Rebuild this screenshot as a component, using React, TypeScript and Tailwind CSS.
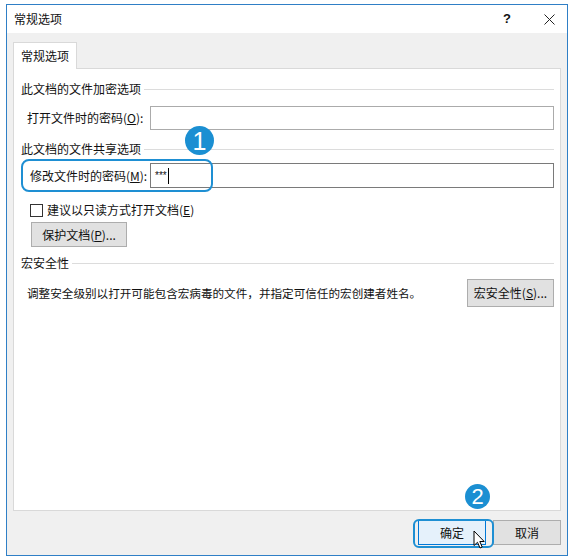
import React from "react";

const font = "font-['Noto_Sans_CJK_SC','Microsoft_YaHei',sans-serif]";

function GroupHeader({ text }: { text: string }) {
  return (
    <div className="flex items-center gap-[3px] h-[16px]">
      <span className="leading-[16px]">{text}</span>
      <div className="flex-1 h-px bg-[#dcdcdc] mr-[0px]" />
    </div>
  );
}

function Cursor() {
  return (
    <svg width="13" height="20" viewBox="0 0 13 20" className="block">
      <path
        d="M1 1 L1 15.5 L4.5 12.3 L7 18 L9.2 17 L6.8 11.5 L11.2 11.5 Z"
        fill="#ffffff"
        stroke="#000000"
        strokeWidth="1"
        strokeLinejoin="round"
      />
    </svg>
  );
}

export default function App() {
  return (
    <div className={`w-[576px] h-[559px] bg-white pt-[4px] pl-[6px] text-[12px] text-[#111] ${font}`}>
      <div className="relative w-[562px] h-[552px] border border-[#2f7fc6] bg-[#f0f0f0] flex flex-col">
        {/* title bar */}
        <div className="h-[28px] bg-white flex items-center justify-between pl-[7px] pr-[8px]">
          <span className="leading-[16px]">常规选项</span>
          <div className="flex items-center gap-[22px]">
            <span className="w-[20px] text-center text-[13px] leading-[16px] font-bold font-['Liberation_Sans',sans-serif]">?</span>
            <span className="w-[20px] flex justify-center">
              <svg width="11" height="11" viewBox="0 0 11 11">
                <path d="M0.5 0.5 L10.5 10.5 M10.5 0.5 L0.5 10.5" stroke="#222" strokeWidth="1" />
              </svg>
            </span>
          </div>
        </div>

        {/* tab area */}
        <div className="flex flex-col px-[6px] pt-[9px]">
          <div className="relative z-10 w-[64px] h-[27px] -mb-px bg-white border border-b-0 border-[#d9d9d9] flex items-center justify-center">
            <span className="leading-[16px]">常规选项</span>
          </div>
          <div className="relative h-[443px] bg-white border border-[#d9d9d9] pl-[7px] pr-[6px] pt-[12px]">
            <GroupHeader text="此文档的文件加密选项" />
            <div className="mt-[9px] flex items-center h-[24px]">
              <div className="w-[129px] pl-[6px] leading-[16px]">
                打开文件时的密码(<u>O</u>):
              </div>
              <div className="flex-1 h-[24px] border border-[#ababab] bg-white" />
            </div>

            <div className="mt-[11px]">
              <GroupHeader text="此文档的文件共享选项" />
            </div>
            <div className="mt-[6px] flex items-center h-[25px]">
              <div className="w-[129px] pl-[9px] leading-[16px]">
                修改文件时的密码(<u>M</u>):
              </div>
              <div className="flex-1 h-[25px] border border-[#7a7a7a] bg-white flex items-center pl-[4px]">
                <span className="text-[10px] leading-[10px] tracking-[0px] font-['Liberation_Sans',sans-serif] pt-[1px]">***</span>
                <span className="ml-[1px] w-px h-[16px] bg-black" />
              </div>
            </div>

            <div className="mt-[14px] flex items-center h-[16px] pl-[9px] gap-[4px]">
              <div className="w-[13px] h-[13px] border border-[#333] bg-white" />
              <span className="leading-[16px]">
                建议以只读方式打开文档(<u>E</u>)
              </span>
            </div>

            <div className="mt-[4px] ml-[10px] w-[96px] h-[25px] bg-[#e1e1e1] border border-[#adadad] flex items-center justify-center">
              <span className="leading-[16px]">
                保护文档(<u>P</u>)...
              </span>
            </div>

            <div className="mt-[8px]">
              <GroupHeader text="宏安全性" />
            </div>
            <div className="mt-[8px] flex items-center justify-between h-[28px]">
              <span className="pl-[6px] leading-[16px] text-[11.6px]">
                调整安全级别以打开可能包含宏病毒的文件，并指定可信任的宏创建者姓名。
              </span>
              <div className="w-[87px] h-[28px] bg-[#e1e1e1] border border-[#adadad] flex items-center justify-center">
                <span className="leading-[16px]">
                  宏安全性(<u>S</u>)...
                </span>
              </div>
            </div>

            {/* annotation 1 */}
            <div className="absolute left-[7px] top-[90px] w-[192px] h-[33px] rounded-[8px] border-2 border-[#1e8fd3]" />
            <div className="absolute left-[171px] top-[57px] w-[29px] h-[29px] rounded-full bg-[#1b8fd2] flex items-center justify-center">
              <span className="text-white text-[25px] leading-none font-normal font-['Liberation_Sans',sans-serif] pt-[1px]">1</span>
            </div>
          </div>
        </div>

        {/* footer */}
        <div className="flex justify-end gap-[7px] pr-[6px] pt-[9px]">
          <div className="w-[68px] h-[25px] bg-[#e5f1fb] border border-[#0078d7] flex items-center justify-center">
            <span className="leading-[16px]">确定</span>
          </div>
          <div className="w-[68px] h-[25px] bg-[#e1e1e1] border border-[#adadad] flex items-center justify-center">
            <span className="leading-[16px]">取消</span>
          </div>
        </div>

        {/* annotation 2 */}
        <div className="absolute left-[406px] top-[514px] w-[81px] h-[29px] rounded-[6px] border-2 border-[#1e8fd3]" />
        <div className="absolute left-[458px] top-[479px] w-[25px] h-[25px] rounded-full bg-[#1b8fd2] flex items-center justify-center">
          <span className="text-white text-[22px] leading-none font-normal font-['Liberation_Sans',sans-serif] pt-[1px]">2</span>
        </div>
        <div className="absolute left-[466px] top-[525px]">
          <Cursor />
        </div>
      </div>
    </div>
  );
}
